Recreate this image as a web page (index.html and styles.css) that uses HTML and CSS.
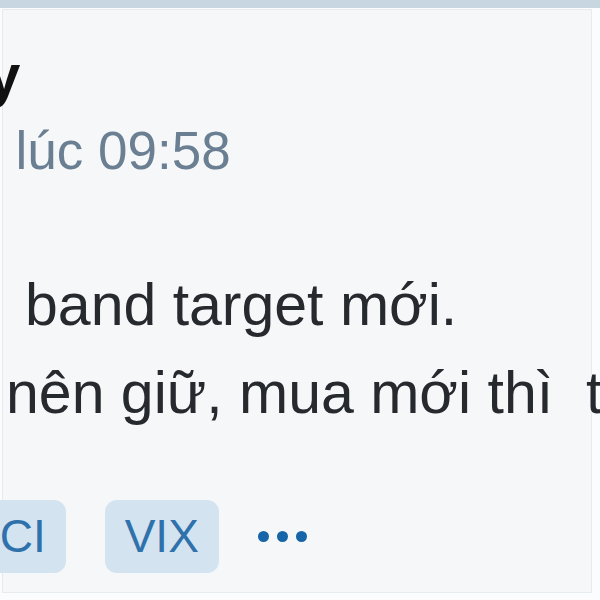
FILE: index.html
```html
<!DOCTYPE html>
<html lang="vi">
<head>
  <meta charset="UTF-8">
  <title>Bài viết</title>
  <link rel="stylesheet" href="styles.css">
</head>
<body>
  <div class="topbar"></div>
  <div class="card">
    <h2 class="author">Duy</h2>
    <p class="time">Hôm nay. lúc 09:58</p>
    <p class="content">band target mới.<br>nên giữ, mua mới thì&nbsp; từ từ</p>
    <div class="tags">
      <span class="tag">VCI</span>
      <span class="tag">VIX</span>
      <span class="more"><i></i><i></i><i></i></span>
    </div>
  </div>
</body>
</html>
```

FILE: styles.css
```css
body {
  margin: 0;
  background: #fbfcfd;
  font-family: 'Liberation Sans', Arial, sans-serif;
  overflow: hidden;
}
.topbar {
  height: 8px;
  background: #c8d6e2;
}
.card {
  box-sizing: border-box;
  margin: 1px 0 0 2px;
  width: 590px;
  height: 584px;
  padding: 31px 0 0 0;
  background: #f5f7f9;
  border: 1px solid #e6ebef;
  white-space: nowrap;
}
.author {
  margin: 0;
  font-size: 60px;
  line-height: 70px;
  font-weight: bold;
  color: #111;
  text-indent: -96px;
}
.time {
  margin: 10px 0 0;
  font-size: 53px;
  line-height: 60px;
  color: #6b7f92;
  text-indent: -225px;
}
.content {
  margin: 80px 0 0 3px;
  font-size: 59px;
  line-height: 88px;
  color: #26292d;
  text-indent: 19px;
}
.tags {
  display: flex;
  align-items: center;
  gap: 39px;
  margin: 63px 0 0 -54px;
}
.tag {
  height: 73px;
  line-height: 73px;
  padding: 0 20px;
  border-radius: 12px;
  background: #d4e3f0;
  color: #2e71ab;
  font-size: 46px;
}
.more {
  display: flex;
  gap: 8px;
}
.more i {
  width: 11px;
  height: 11px;
  border-radius: 50%;
  background: #1565a8;
}
```
